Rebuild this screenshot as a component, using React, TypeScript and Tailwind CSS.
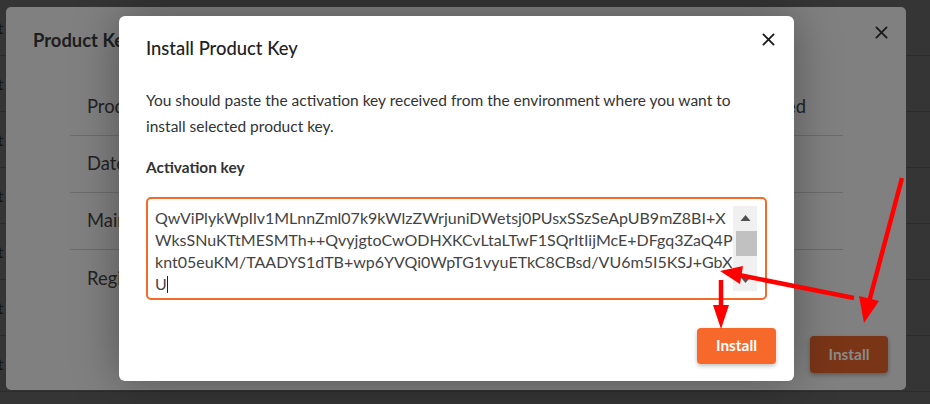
import React from "react";

const keyLines = [
  "QwViPlykWpIlv1MLnnZml07k9kWlzZWrjuniDWetsj0PUsxSSzSeApUB9mZ8BI+X",
  "WksSNuKTtMESMTh++QvyjgtoCwODHXKCvLtaLTwF1SQrItIijMcE+DFgq3ZaQ4P",
  "knt05euKM/TAADYS1dTB+wp6YVQi0WpTG1vyuETkC8CBsd/VU6m5I5KSJ+GbX",
];

function CloseIcon({ className }: { className?: string }) {
  return (
    <svg viewBox="0 0 14 14" className={className} fill="none" stroke="currentColor" strokeWidth="2" strokeLinecap="round">
      <path d="M1.5 1.5 L12.5 12.5 M12.5 1.5 L1.5 12.5" />
    </svg>
  );
}

export default function App() {
  const rows = [0, 1, 2, 3, 4, 5, 6];
  return (
    <div
      className="relative w-[930px] h-[404px] overflow-hidden bg-[#353535]"
      style={{ fontFamily: "Lato, 'Open Sans', sans-serif" }}
    >
      {/* background page rows (dimmed) */}
      <div className="flex flex-col">
        {rows.map((r) => (
          <div key={r} className="h-[56px] border-b border-[#2c2c2c] flex items-center text-[16px] text-[#141414]">
            <span className="-ml-[52px]">Product</span>
          </div>
        ))}
      </div>

      {/* outer (dimmed) modal */}
      <div className="absolute left-[6px] top-[7px] w-[900px] h-[383px] rounded-[5px] bg-[#808080] flex flex-col">
        <div className="flex items-center justify-between pl-[27px] pr-[18px] pt-[19px]">
          <div className="text-[18.4px] font-bold text-[#1e1e1e] leading-[28px]">Product Key</div>
          <CloseIcon className="w-[13px] h-[13px] text-[#1a1a1a] -mt-[15px]" />
        </div>
        <div className="mt-[25px] ml-[64px] mr-[63px] flex flex-col">
          {["Product", "Date", "Maintenance", "Registered"].map((l, i) => (
            <div
              key={l}
              className={`flex items-center justify-between pl-[17px] pr-[37px] h-[57px] text-[18.4px] text-[#232323] ${i < 3 ? "border-b border-[#6c6c6c]" : ""}`}
            >
              <span>{l}</span>
              {i === 0 && <span>Installed</span>}
            </div>
          ))}
        </div>
        <div className="flex-1" />
        <div className="flex justify-end pr-[18px] pb-[17px]">
          <div className="w-[78px] h-[37px] rounded-[4px] bg-[#7a3517] shadow-[0_2px_4px_rgba(0,0,0,0.3)] flex items-center justify-center text-[15.4px] font-bold text-[#8a8a8a]">
            Install
          </div>
        </div>
      </div>

      {/* inner modal */}
      <div className="absolute left-[119px] top-[16px] w-[675px] h-[365px] rounded-[6px] bg-white shadow-[0_0_45px_rgba(0,0,0,0.35)] flex flex-col">
        <div className="flex items-start justify-between pl-[27px] pr-[18px] pt-[20px]">
          <div className="text-[18.4px] leading-[24px] font-medium text-[#222]">Install Product Key</div>
          <CloseIcon className="w-[13px] h-[13px] text-[#1a1a1a] mt-[-3px] mr-[1px]" />
        </div>
        <div className="px-[27px]">
          <p className="mt-[27px] max-w-[600px] text-[15.5px] leading-[26px] text-[#333]">
            You should paste the activation key received from the environment where you want to install selected product key.
          </p>
          <div className="mt-[17px] text-[15.4px] leading-[22px] font-bold text-[#333]">Activation key</div>
          <div className="mt-[19px] h-[103px] rounded-[5px] border-2 border-[#f26b2b] flex pl-[7px] pr-[8px] pt-[7px] pb-[7px]">
            <div className="flex-1 min-w-0 pt-[1px] text-[16px] leading-[22px] text-[#444] whitespace-nowrap">
              {keyLines.map((l) => (
                <div key={l}>{l}</div>
              ))}
              <div className="flex items-center">
                <span>U</span>
                <span className="inline-block w-[1px] h-[17px] bg-[#222]" />
              </div>
            </div>
            <div className="w-[24px] shrink-0 bg-[#f0f0f0] flex flex-col items-center">
              <svg viewBox="0 0 10 6" className="w-[11px] h-[6px] mt-[9px]" fill="#505050">
                <path d="M0 6 L5 0 L10 6 Z" />
              </svg>
              <div className="mt-[10px] ml-[3px] w-[21px] h-[25px] bg-[#c1c1c1]" />
              <div className="flex-1" />
              <svg viewBox="0 0 10 6" className="w-[11px] h-[6px] mb-[8px]" fill="#505050">
                <path d="M0 0 L5 6 L10 0 Z" />
              </svg>
            </div>
          </div>
        </div>
        <div className="flex-1" />
        <div className="flex justify-end pr-[18px] pb-[17px]">
          <div className="w-[79px] h-[36px] rounded-[4px] bg-[#f7692a] shadow-[0_2px_4px_rgba(0,0,0,0.25)] flex items-center justify-center text-[15.4px] font-bold text-white">
            Install
          </div>
        </div>
      </div>

      {/* red arrows annotation */}
      <svg className="absolute inset-0 pointer-events-none" width="930" height="404" viewBox="0 0 930 404">
        <g stroke="#ff0000" strokeWidth="4.5" strokeLinecap="butt" fill="none">
          <line x1="854" y1="298" x2="739" y2="275" />
          <line x1="721" y1="280" x2="721" y2="311" />
          <line x1="902" y1="178" x2="869" y2="302" />
        </g>
        <g fill="#ff0000">
          <polygon points="720,271 743,266 740,284" />
          <polygon points="721,329 713,305 729,305" />
          <polygon points="864,323 859,296 879,301" />
        </g>
      </svg>
    </div>
  );
}
